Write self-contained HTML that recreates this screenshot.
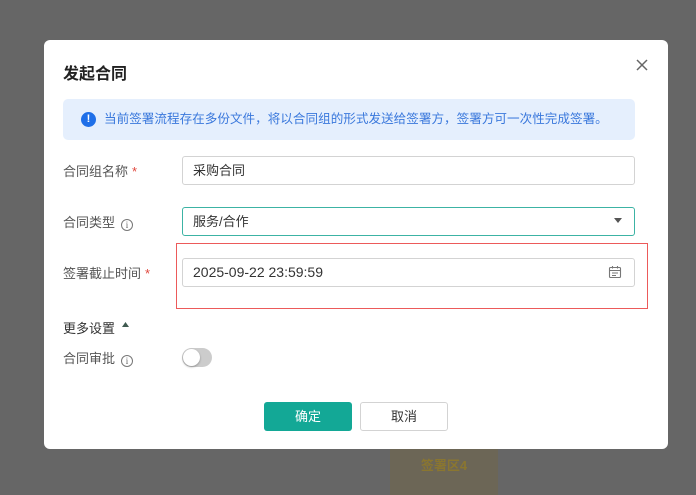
<!DOCTYPE html>
<html><head><meta charset="utf-8"><style>
*{box-sizing:border-box;margin:0;padding:0}
body{width:696px;height:495px;background:#666;position:relative;overflow:hidden;font-family:"Liberation Sans","Noto Sans CJK SC",sans-serif}
.ab{position:absolute}
.modal{left:44px;top:40px;width:624px;height:409px;background:#fff;border-radius:6px}
.lbl{font-size:13px;color:#555;line-height:16px}
.req{color:#e0463c;margin-left:4px}
.inp{left:182px;width:453px;height:29px;border:1px solid #d3d3d3;border-radius:3px;font-size:13px;color:#333;padding-left:10px;line-height:27px}
.info{display:inline-block;width:12px;height:12px;border:1px solid #777;border-radius:50%;font-size:9px;line-height:10px;text-align:center;color:#666;margin-left:6px;vertical-align:-1px;font-family:"Liberation Serif",serif}
</style></head><body>
<div class="ab" style="left:390px;top:449px;width:108px;height:46px;background:#6c6656"></div>
<div class="ab" style="left:390px;top:455px;width:108px;text-align:center;font-size:13px;color:#8a7630;font-weight:bold">签署区4</div>
<div class="ab modal"></div>
<div class="ab" style="left:63px;top:60px;font-size:16px;font-weight:bold;color:#222">发起合同</div>
<svg class="ab" style="left:635px;top:58px" width="14" height="14" viewBox="0 0 14 14"><path d="M2 2L12 12M12 2L2 12" stroke="#666" stroke-width="1.5"/></svg>
<div class="ab" style="left:63px;top:99px;width:572px;height:41px;background:#e5effd;border-radius:5px"></div>
<div class="ab" style="left:81px;top:112px;width:15px;height:15px;border-radius:50%;background:#1f6fe8;color:#fff;font-size:11px;font-weight:bold;text-align:center;line-height:15px">!</div>
<div class="ab" style="left:104px;top:111px;font-size:12.6px;color:#3a78dc;line-height:17px">当前签署流程存在多份文件，将以合同组的形式发送给签署方，签署方可一次性完成签署。</div>
<div class="ab lbl" style="left:63px;top:164px">合同组名称<span class="req">*</span></div>
<div class="ab inp" style="top:156px">采购合同</div>
<div class="ab lbl" style="left:63px;top:215px">合同类型<span class="info">i</span></div>
<div class="ab inp" style="top:207px;border-color:#3cb3a4">服务/合作</div>
<svg class="ab" style="left:614px;top:218px" width="8" height="6"><path d="M0 0H8L4 5Z" fill="#555"/></svg>
<div class="ab" style="left:176px;top:243px;width:472px;height:66px;border:1.5px solid #ec5a5a"></div>
<div class="ab lbl" style="left:63px;top:266px">签署截止时间<span class="req">*</span></div>
<div class="ab inp" style="top:258px;font-size:14px">2025-09-22 23:59:59</div>
<svg class="ab" style="left:608px;top:265px" width="14" height="14" viewBox="0 0 14 14" fill="none" stroke="#777" stroke-width="1.1"><rect x="1.5" y="2.5" width="11" height="10" rx="1"/><path d="M1.5 5.5H12.5M4.5 1V3.5M9.5 1V3.5M4 8H10M4 10.5H8"/></svg>
<div class="ab" style="left:63px;top:318px;font-size:13px;color:#333">更多设置</div>
<svg class="ab" style="left:122px;top:322px" width="8" height="6"><path d="M0 5H7L3.5 0Z" fill="#3f5a50"/></svg>
<div class="ab lbl" style="left:63px;top:351px">合同审批<span class="info">i</span></div>
<div class="ab" style="left:182px;top:348px;width:30px;height:19px;border-radius:10px;background:#ccc"></div>
<div class="ab" style="left:183px;top:349px;width:17px;height:17px;border-radius:50%;background:#fff;box-shadow:0 1px 2px rgba(0,0,0,.3)"></div>
<div class="ab" style="left:264px;top:402px;width:88px;height:29px;background:#13a896;border-radius:3px;color:#fff;font-size:13px;text-align:center;line-height:29px">确定</div>
<div class="ab" style="left:360px;top:402px;width:88px;height:29px;border:1px solid #d3d3d3;border-radius:3px;color:#333;font-size:13px;text-align:center;line-height:27px">取消</div>
</body></html>
